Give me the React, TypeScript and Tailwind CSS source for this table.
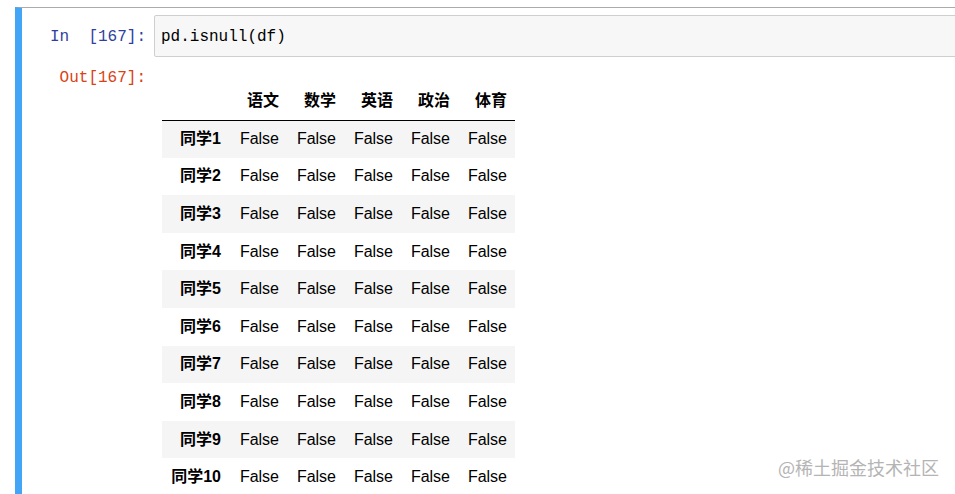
import React from "react";

const cols = ["语文", "数学", "英语", "政治", "体育"];
const rows = Array.from({ length: 10 }).map((_, i) => `同学${i + 1}`);

const mono = { fontFamily: '"Liberation Mono", "Noto Sans CJK SC", monospace' };

export default function App() {
  return (
    <div className="relative w-[955px] h-[494px] overflow-hidden bg-white">
      <div className="pt-[7px] pl-[15px]">
        {/* cell */}
        <div className="w-[1100px] h-[487px] border-l-[7px] border-l-[#42a5f5] border-t border-t-[#ababab]">
          {/* input row */}
          <div className="flex pt-[7px]">
            <div
              className="w-[132px] shrink-0 pt-[2px] pr-[8px] text-right text-[16px] leading-[40px] text-[#303f9f] whitespace-pre"
              style={mono}
            >
              {"In  [167]:"}
            </div>
            <div
              className="flex-1 h-[42px] rounded-[2px] border border-[#cfcfcf] bg-[#f7f7f7] pt-[2px] pl-[6px] text-[16px] leading-[38px] text-black"
              style={mono}
            >
              pd.isnull(df)
            </div>
          </div>

          {/* output row */}
          <div className="flex pt-[9px]">
            <div
              className="w-[132px] shrink-0 pt-[2px] pr-[8px] text-right text-[16px] leading-[20px] text-[#d84315]"
              style={mono}
            >
              Out[167]:
            </div>
            <div className="pl-[8px] pt-[17px]">
              <table
                className="border-collapse text-[16px] text-black"
                style={{ fontFamily: '"Liberation Sans", "Noto Sans CJK SC", sans-serif' }}
              >
                <thead>
                  <tr className="h-[37px] border-b border-black">
                    <th className="w-[68px] p-0"></th>
                    {cols.map((c) => (
                      <th key={c} className="w-[57px] p-0 pr-[8px] text-right font-bold">
                        {c}
                      </th>
                    ))}
                  </tr>
                </thead>
                <tbody>
                  {rows.map((r, i) => (
                    <tr
                      key={r}
                      className={`h-[37.6px] ${i % 2 === 0 ? "bg-[#f5f5f5]" : "bg-white"}`}
                    >
                      <th className="p-0 pr-[9px] text-right font-bold">{r}</th>
                      {cols.map((c) => (
                        <td key={c} className="p-0 pr-[8px] text-right">
                          False
                        </td>
                      ))}
                    </tr>
                  ))}
                </tbody>
              </table>
            </div>
          </div>
        </div>
      </div>

      {/* watermark */}
      <div
        className="absolute left-[778px] top-[456px] text-[18px] leading-[22px] text-[#b4b4b4]"
        style={{ fontFamily: '"Noto Sans CJK SC", sans-serif' }}
      >
        @稀土掘金技术社区
      </div>
    </div>
  );
}
